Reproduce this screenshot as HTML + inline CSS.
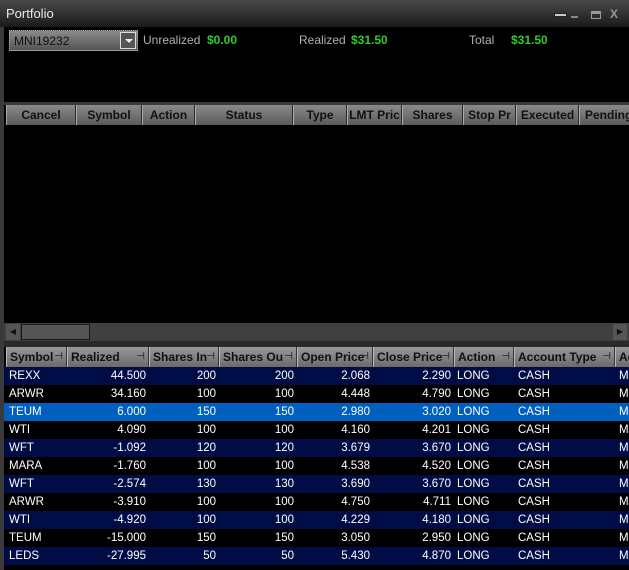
<!DOCTYPE html>
<html><head><meta charset="utf-8"><style>
*{margin:0;padding:0;box-sizing:border-box}
body{width:629px;height:570px;background:#000;overflow:hidden;position:relative;font-family:"Liberation Sans",sans-serif;font-size:12px;color:#fff}
.a{position:absolute}
#title{left:0;top:0;width:629px;height:27px;background:linear-gradient(#4a4a4a,#1a1a1a);}
#title span{position:absolute;left:6px;top:6px;font-size:13px;color:#e8e8e8}
#lb{left:0;top:27px;width:4px;height:543px;background:#3a3a3a}
.lbl{color:#b0b0b0;font-size:12px;top:33px}
.grn{color:#2ecc2e;font-weight:bold;font-size:12px;top:33px}
.h1{top:105px;height:20px;background:linear-gradient(#8a8a8a,#5a5a5a);border-right:1px solid #2a2a2a;border-left:1px solid #aaa;color:#111;font-weight:bold;text-align:center;line-height:20px;font-size:12px;white-space:nowrap;overflow:hidden}
.h2{top:347px;height:20px;background:linear-gradient(#9a9a9a,#6a6a6a);border-right:1px solid #333;border-left:1px solid #bbb;color:#111;font-weight:bold;line-height:20px;font-size:12px;padding-left:3px;white-space:nowrap;overflow:hidden}
.pin{position:absolute;right:3px;top:0;font-weight:normal;font-size:10px}
.row{position:absolute;left:4px;width:625px;height:18px;line-height:18px;font-size:11.5px}
.row span{position:absolute;white-space:nowrap}
.r{text-align:right}
</style></head><body>
<div id="title" class="a"><span>Portfolio</span>
<div class="a" style="left:554px;top:13px;width:13px;height:4px;background:#ccc;border:1px solid #222"></div>
<div class="a" style="left:571px;top:16px;width:7px;height:2px;background:#888"></div>
<div class="a" style="left:591px;top:11px;width:10px;height:8px;border:1px solid #999;border-top-width:3px"></div>
<div class="a" style="left:610px;top:7px;color:#999;font-weight:bold;font-size:12px">X</div>
</div>
<div id="lb" class="a"></div>
<div class="a" style="left:9px;top:30px;width:129px;height:21px;border:1px dotted #aaa;background:linear-gradient(#8a8a8a,#555)"><span class="a" style="left:4px;top:3px;color:#111;font-size:12px">MNI19232</span>
<div class="a" style="right:1px;top:1px;width:16px;height:17px;background:#555;border:1px solid #ddd"><div class="a" style="left:4px;top:6px;border-left:4px solid transparent;border-right:4px solid transparent;border-top:4px solid #eee"></div></div></div>
<span class="a lbl" style="left:143px">Unrealized</span><span class="a grn" style="left:207px">$0.00</span>
<span class="a lbl" style="left:299px">Realized</span><span class="a grn" style="left:351px">$31.50</span>
<span class="a lbl" style="left:469px">Total</span><span class="a grn" style="left:511px">$31.50</span>
<div class="a" style="left:4px;top:102px;width:625px;height:3px;background:#3a3a3a"></div>
<div class="a h1" style="left:6px;width:70px">Cancel</div>
<div class="a h1" style="left:76px;width:66px">Symbol</div>
<div class="a h1" style="left:142px;width:53px">Action</div>
<div class="a h1" style="left:195px;width:98px">Status</div>
<div class="a h1" style="left:293px;width:54px">Type</div>
<div class="a h1" style="left:347px;width:55px">LMT Pric</div>
<div class="a h1" style="left:402px;width:61px">Shares</div>
<div class="a h1" style="left:463px;width:53px">Stop Pr</div>
<div class="a h1" style="left:516px;width:63px">Executed</div>
<div class="a h1" style="left:579px;width:60px;text-align:left;padding-left:5px">Pending</div>
<div class="a" style="left:4px;top:323px;width:625px;height:18px;background:#404040"></div>
<div class="a" style="left:6px;top:324px;width:14px;height:16px;background:#555;color:#111;font-size:8px;line-height:16px;text-align:center">◀</div>
<div class="a" style="left:21px;top:324px;width:69px;height:16px;background:#555;border:1px solid #1a1a1a"></div>
<div class="a" style="left:613px;top:324px;width:14px;height:16px;background:#555;color:#111;font-size:8px;line-height:16px;text-align:center">▶</div>
<div class="a" style="left:4px;top:341px;width:625px;height:6px;background:#2a2a2a"></div>
<div class="a h2" style="left:6px;width:61px">Symbol<span class="pin">⊣</span></div>
<div class="a h2" style="left:67px;width:82px">Realized<span class="pin">⊣</span></div>
<div class="a h2" style="left:149px;width:70px">Shares In<span class="pin">⊣</span></div>
<div class="a h2" style="left:219px;width:78px">Shares Ou<span class="pin">⊣</span></div>
<div class="a h2" style="left:297px;width:76px">Open Price<span class="pin">⊣</span></div>
<div class="a h2" style="left:373px;width:81px">Close Price<span class="pin">⊣</span></div>
<div class="a h2" style="left:454px;width:60px">Action<span class="pin">⊣</span></div>
<div class="a h2" style="left:514px;width:101px">Account Type<span class="pin">⊣</span></div>
<div class="a h2" style="left:615px;width:20px">Ac</div>
<div id="rows"></div>
<script>
var d=[["REXX","44.500",200,200,"2.068","2.290"],["ARWR","34.160",100,100,"4.448","4.790"],["TEUM","6.000",150,150,"2.980","3.020"],["WTI","4.090",100,100,"4.160","4.201"],["WFT","-1.092",120,120,"3.679","3.670"],["MARA","-1.760",100,100,"4.538","4.520"],["WFT","-2.574",130,130,"3.690","3.670"],["ARWR","-3.910",100,100,"4.750","4.711"],["WTI","-4.920",100,100,"4.229","4.180"],["TEUM","-15.000",150,150,"3.050","2.950"],["LEDS","-27.995",50,50,"5.430","4.870"]];
var h="";
d.forEach(function(r,i){var bg=i==2?"#0060c0":(i%2==0?"#000c45":"#000");
h+='<div class="row" style="top:'+(367+i*18)+'px;background:'+bg+'">'+
'<span style="left:5px">'+r[0]+'</span>'+
'<span class="r" style="right:'+(629-146)+'px">'+r[1]+'</span>'+
'<span class="r" style="right:'+(629-216)+'px">'+r[2]+'</span>'+
'<span class="r" style="right:'+(629-294)+'px">'+r[3]+'</span>'+
'<span class="r" style="right:'+(629-370)+'px">'+r[4]+'</span>'+
'<span class="r" style="right:'+(629-451)+'px">'+r[5]+'</span>'+
'<span style="left:453px">LONG</span><span style="left:514px">CASH</span><span style="left:615px">M</span></div>';});
document.getElementById("rows").innerHTML=h;
</script>
</body></html>
